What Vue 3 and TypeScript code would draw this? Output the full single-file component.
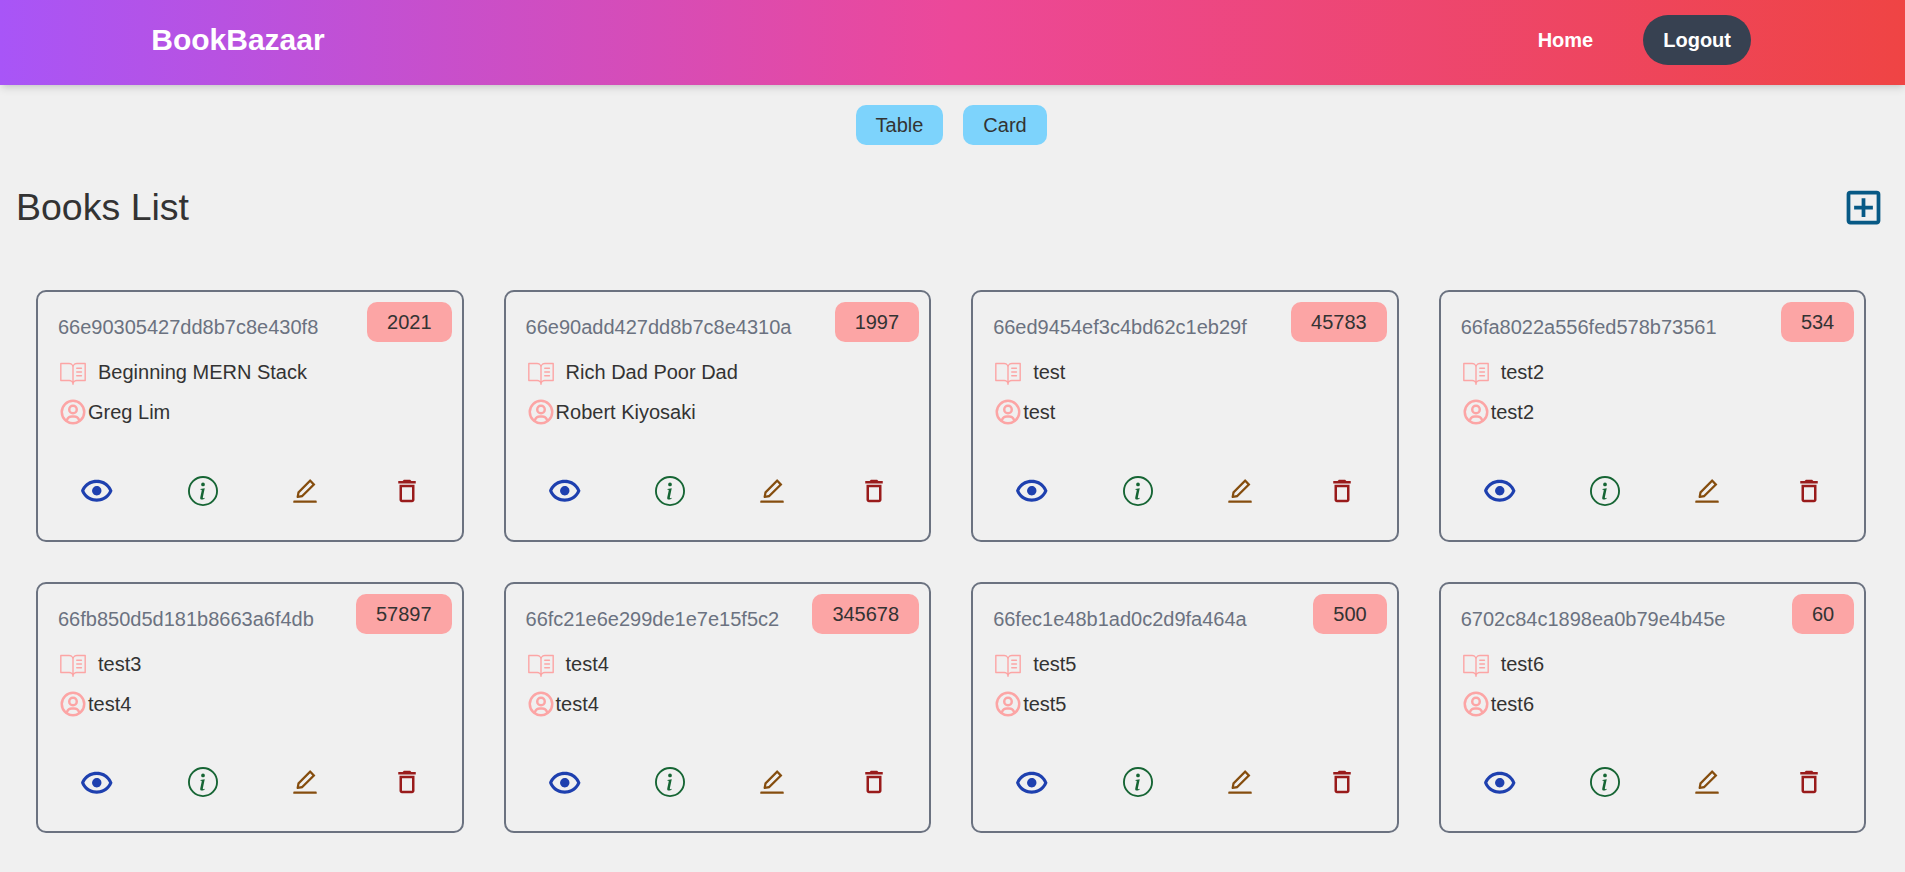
<script setup lang="ts">
interface Book {
  id: string
  title: string
  author: string
  year: number
}

const books: Book[] = [
  { id: '66e90305427dd8b7c8e430f8', title: 'Beginning MERN Stack', author: 'Greg Lim', year: 2021 },
  { id: '66e90add427dd8b7c8e4310a', title: 'Rich Dad Poor Dad', author: 'Robert Kiyosaki', year: 1997 },
  { id: '66ed9454ef3c4bd62c1eb29f', title: 'test', author: 'test', year: 45783 },
  { id: '66fa8022a556fed578b73561', title: 'test2', author: 'test2', year: 534 },
  { id: '66fb850d5d181b8663a6f4db', title: 'test3', author: 'test4', year: 57897 },
  { id: '66fc21e6e299de1e7e15f5c2', title: 'test4', author: 'test4', year: 345678 },
  { id: '66fec1e48b1ad0c2d9fa464a', title: 'test5', author: 'test5', year: 500 },
  { id: '6702c84c1898ea0b79e4b45e', title: 'test6', author: 'test6', year: 60 },
]
</script>

<template>
  <div class="page">
    <header class="navbar">
      <div class="brand">BookBazaar</div>
      <nav class="links">
        <a class="home">Home</a>
        <button class="logout">Logout</button>
      </nav>
    </header>

    <main class="content">
      <div class="views">
        <button class="view">Table</button>
        <button class="view">Card</button>
      </div>

      <div class="heading">
        <h1 class="title">Books List</h1>
        <svg class="add" viewBox="0 0 24 24"><path d="M19 3H5a2 2 0 0 0-2 2v14c0 1.1.89 2 2 2h14c1.1 0 2-.9 2-2V5a2 2 0 0 0-2-2zm0 16H5V5h14v14zm-8-2h2v-4h4v-2h-4V7h-2v4H7v2h4z" /></svg>
      </div>

      <div class="grid">
        <article v-for="book in books" :key="book.id" class="card">
          <span class="year">{{ book.year }}</span>
          <div class="id">{{ book.id }}</div>
          <div class="row name">
            <svg class="icon pink" viewBox="0 0 256 256"><path d="M232,50H160a38,38,0,0,0-32,17.55A38,38,0,0,0,96,50H24a6,6,0,0,0-6,6V200a6,6,0,0,0,6,6H96a26,26,0,0,1,26,26,6,6,0,0,0,12,0,26,26,0,0,1,26-26h72a6,6,0,0,0,6-6V56A6,6,0,0,0,232,50ZM96,194H30V62H96a26,26,0,0,1,26,26V204.31A37.86,37.86,0,0,0,96,194Zm130,0H160a37.87,37.87,0,0,0-26,10.32V88a26,26,0,0,1,26-26h66ZM160,90h40a6,6,0,0,1,0,12H160a6,6,0,0,1,0-12Zm46,38a6,6,0,0,1-6,6H160a6,6,0,0,1,0-12h40A6,6,0,0,1,206,128Zm0,32a6,6,0,0,1-6,6H160a6,6,0,0,1,0-12h40A6,6,0,0,1,206,160Z" /></svg>
            <span>{{ book.title }}</span>
          </div>
          <div class="row author">
            <svg class="icon pink" viewBox="0 0 24 24">
              <path d="M12 2A10.13 10.13 0 0 0 2 12a10 10 0 0 0 4 7.92V20h.1a9.7 9.7 0 0 0 11.8 0h.1v-.08A10 10 0 0 0 22 12 10.13 10.13 0 0 0 12 2zM8.07 18.93A3 3 0 0 1 11 16.57h2a3 3 0 0 1 2.93 2.36 7.75 7.75 0 0 1-7.86 0zm9.54-1.29A5 5 0 0 0 13 14.57h-2a5 5 0 0 0-4.61 3.07A8 8 0 0 1 4 12a8.1 8.1 0 0 1 8-8 8.1 8.1 0 0 1 8 8 8 8 0 0 1-2.39 5.64z" />
              <path d="M12 6a3.91 3.91 0 0 0-4 4 3.91 3.91 0 0 0 4 4 3.91 3.91 0 0 0 4-4 3.91 3.91 0 0 0-4-4zm0 6a1.91 1.91 0 0 1-2-2 1.91 1.91 0 0 1 2-2 1.91 1.91 0 0 1 2 2 1.91 1.91 0 0 1-2 2z" />
            </svg>
            <span>{{ book.author }}</span>
          </div>
          <div class="actions">
            <svg class="icon show" viewBox="0 0 24 24">
              <path d="M12 9a3.02 3.02 0 0 0-3 3c0 1.642 1.358 3 3 3 1.641 0 3-1.358 3-3 0-1.641-1.359-3-3-3z" />
              <path d="M12 5c-7.633 0-9.927 6.617-9.948 6.684L1.946 12l.105.316C2.073 12.383 4.367 19 12 19s9.927-6.617 9.948-6.684l.106-.316-.105-.316C21.927 11.617 19.633 5 12 5zm0 12c-5.351 0-7.424-3.846-7.926-5C4.578 10.842 6.652 7 12 7c5.351 0 7.424 3.846 7.926 5-.504 1.158-2.578 5-7.926 5z" />
            </svg>
            <svg class="icon info" viewBox="0 0 16 16">
              <path d="M8 15A7 7 0 1 1 8 1a7 7 0 0 1 0 14m0 1A8 8 0 1 0 8 0a8 8 0 0 0 0 16" />
              <path d="m8.93 6.588-2.29.287-.082.38.45.083c.294.07.352.176.288.469l-.738 3.468c-.194.897.105 1.319.808 1.319.545 0 1.178-.252 1.465-.598l.088-.416c-.2.176-.492.246-.686.246-.275 0-.375-.193-.304-.533zM9 4.5a1 1 0 1 1-2 0 1 1 0 0 1 2 0" />
            </svg>
            <svg class="icon edit" viewBox="0 0 1024 1024"><path d="M257.7 752c2 0 4-.2 6-.5L431.9 722c2-.4 3.9-1.3 5.3-2.8l423.9-423.9a9.96 9.96 0 0 0 0-14.1L694.9 114.9c-1.9-1.9-4.4-2.9-7.1-2.9s-5.2 1-7.1 2.9L256.8 538.8c-1.5 1.5-2.4 3.3-2.8 5.3l-29.5 168.2a33.5 33.5 0 0 0 9.4 29.8c6.6 6.4 14.9 9.9 23.8 9.9zm67.4-174.4L687.8 215l73.3 73.3-362.7 362.6-88.9 15.7 15.6-89zM880 836H144c-17.7 0-32 14.3-32 32v36c0 4.4 3.6 8 8 8h784c4.4 0 8-3.6 8-8v-36c0-17.7-14.3-32-32-32z" /></svg>
            <svg class="icon delete" viewBox="0 0 24 24"><path d="M16 9v10H8V9h8m-1.500-6h-5l-1 1H5v2h14V4h-3.500l-1-1zM18 7H6v12c0 1.100.9 2 2 2h8c1.100 0 2-.9 2-2V7z" /></svg>
          </div>
        </article>
      </div>
    </main>
  </div>
</template>

<style>
body {
  background: #f0f0f0;
}
</style>

<style scoped>
.page {
  min-height: 872px;
  background: #f0f0f0;
  color: #333;
  font-family: 'Liberation Sans', Arial, sans-serif;
  font-size: 20px;
  line-height: 30px;
}
.page * {
  box-sizing: border-box;
}
button {
  border: 0;
  margin: 0;
  font: inherit;
  color: inherit;
}
svg {
  display: block;
  fill: currentColor;
  flex: none;
}
.navbar {
  display: flex;
  justify-content: space-between;
  align-items: center;
  height: 85px;
  padding: 0 154px 5px 151.25px;
  background: linear-gradient(to right, #a855f7, #ec4899, #ef4444);
  box-shadow: 0 5px 7.5px -1.25px rgba(0, 0, 0, 0.1), 0 2.5px 5px -2.5px rgba(0, 0, 0, 0.1);
  color: #fff;
  font-weight: 700;
}
.brand {
  font-size: 30px;
  line-height: 40px;
}
.links {
  display: flex;
  align-items: center;
  gap: 50px;
}
.logout {
  padding: 10px 20px;
  border-radius: 25px;
  background: #374151;
}
.content {
  padding: 20px 18.75px 0 16px;
}
.views {
  display: flex;
  justify-content: center;
  gap: 20px;
}
.view {
  padding: 5px 20px;
  border-radius: 10px;
  background: #7dd3fc;
}
.heading {
  display: flex;
  justify-content: space-between;
  align-items: center;
  height: 45px;
  margin-top: 40px;
}
.title {
  margin: 0;
  font-size: 37.5px;
  font-weight: 400;
  line-height: 45px;
}
.add {
  width: 45px;
  height: 45px;
  color: #075985;
}
.grid {
  display: grid;
  grid-template-columns: repeat(4, 1fr);
  grid-auto-rows: 251.25px;
  gap: 40px;
  padding: 60.45px 20px 0;
}
.card {
  position: relative;
  padding: 20px;
  border: 2px solid #6b7280;
  border-radius: 10px;
}
.year {
  position: absolute;
  top: 10px;
  right: 10px;
  padding: 5px 20px;
  border-radius: 10px;
  background: #fca5a5;
}
.id {
  color: #6b7280;
}
.row {
  display: flex;
  align-items: center;
}
.name {
  gap: 10px;
  margin-top: 15px;
}
.author {
  margin-top: 10px;
}
.icon {
  width: 30px;
  height: 30px;
}
.pink {
  color: #fca5a5;
}
.actions {
  display: flex;
  justify-content: space-between;
  align-items: center;
  margin-top: 45px;
  padding: 0 20px;
}
.show {
  width: 37.5px;
  height: 37.5px;
  color: #1e40af;
}
.info {
  color: #166534;
}
.edit {
  color: #854d0e;
}
.delete {
  color: #991b1b;
}
</style>
